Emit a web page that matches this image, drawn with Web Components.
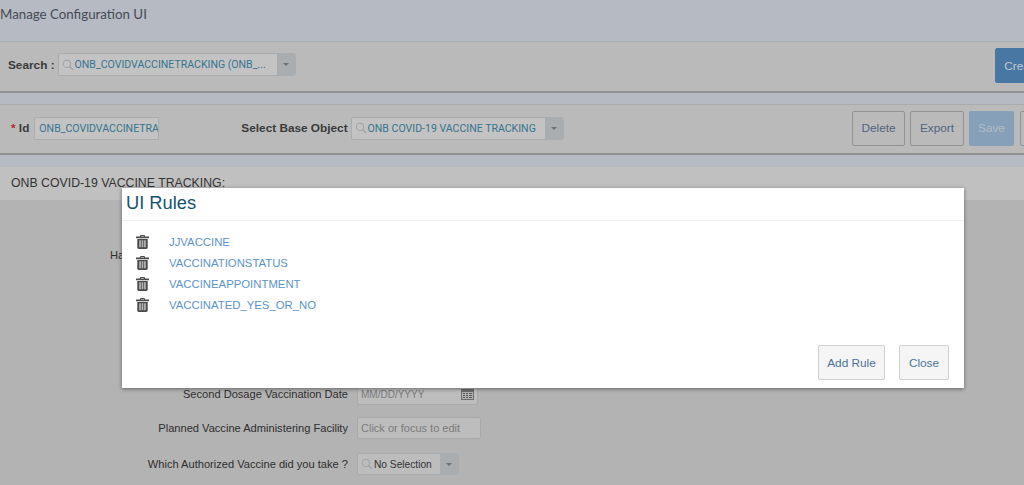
<!DOCTYPE html>
<html>
<head>
<meta charset="utf-8">
<title>Manage Configuration UI</title>
<style>
  html, body { margin: 0; height: 485px; overflow: hidden; }
  body { background: #b3b3b3; font-family: "Liberation Sans", sans-serif; }
</style>
</head>
<body>
<config-page></config-page>

<script>
const SEARCH_ICON = `<svg width="12" height="12" viewBox="0 0 13 13" fill="none" stroke="#a0a3a5" stroke-width="1.1"><circle cx="5.3" cy="5.3" r="3.9"/><path d="M8.2 8.2l3.8 3.8" stroke-width="1.5"/></svg>`;

class AppButton extends HTMLElement {
  connectedCallback() {
    const shadow = this.attachShadow({ mode: "open" });
    shadow.innerHTML = `
      <style>
        :host {
          display: inline-flex; align-items: center; justify-content: center;
          box-sizing: border-box; height: 35px; flex: none;
          border: 1px solid #929292; border-radius: 2px;
          background: #bababa; color: #4f6580;
          font: 11.8px "Liberation Sans", sans-serif;
        }
        :host([kind="primary"]) { background: #4877a3; border-color: #4877a3; color: #c3c9d0; }
        :host([kind="disabled"]) { background: #85a0b8; border-color: #85a0b8; color: #b3bdc6; }
        :host([kind="light"]) { background: #f5f5f5; border-color: #d0d0d0; color: #4a7299; }
      </style>
      <slot></slot>`;
  }
}
customElements.define("app-button", AppButton);

class ComboBox extends HTMLElement {
  connectedCallback() {
    const shadow = this.attachShadow({ mode: "open" });
    shadow.innerHTML = `
      <style>
        :host {
          display: inline-flex; box-sizing: border-box; height: 23px; flex: none;
          border: 1px solid #a9adaf; border-radius: 2px; background: #c3c3c3;
          color: #36748f; font: 10.55px Roboto, sans-serif;
        }
        :host([plain]) { color: #333; font: 10.2px "Liberation Sans", sans-serif; background: #bdbdbd; height: 22px; }
        .value { flex: 1; min-width: 0; display: flex; align-items: center; gap: 1px; padding-left: 3px; white-space: nowrap; overflow: hidden; }
        .arrow { width: 18px; display: flex; align-items: center; justify-content: center; background: #a9adaf; border-radius: 0 2px 2px 0; }
        .arrow i { width: 0; height: 0; border: 3.5px solid transparent; border-top: 3.5px solid #6f7377; border-bottom: 0; }
      </style>
      <div class="value">${SEARCH_ICON}<span><slot></slot></span></div>
      <div class="arrow"><i></i></div>`;
  }
}
customElements.define("combo-box", ComboBox);

class FormRow extends HTMLElement {
  connectedCallback() {
    const shadow = this.attachShadow({ mode: "open" });
    shadow.innerHTML = `
      <style>
        :host {
          display: grid; grid-template-columns: 238px auto; justify-content: start;
          column-gap: 9px; align-items: center;
          color: #2e2e2e; font: 11.1px "Liberation Sans", sans-serif;
        }
        .label { text-align: right; white-space: nowrap; }
        :host([left]) .label { text-align: left; }
      </style>
      <div class="label">${this.getAttribute("label")}</div>
      <div><slot></slot></div>`;
  }
}
customElements.define("form-row", FormRow);

class TextField extends HTMLElement {
  connectedCallback() {
    const shadow = this.attachShadow({ mode: "open" });
    shadow.innerHTML = `
      <style>
        :host {
          display: flex; align-items: center; justify-content: space-between;
          box-sizing: border-box; height: 22px; width: 124px; padding: 0 3px 0 3px;
          border: 1px solid #a9a9a9; border-radius: 2px; background: #bdbdbd;
          color: #7b7b7b; font: 11px "Liberation Sans", sans-serif;
        }
      </style>
      <slot></slot>`;
  }
}
customElements.define("text-field", TextField);

class RuleItem extends HTMLElement {
  connectedCallback() {
    const shadow = this.attachShadow({ mode: "open" });
    shadow.innerHTML = `
      <style>
        :host { display: flex; align-items: center; height: 21px; gap: 20px; }
        svg { flex: none; }
        a { color: #5b94c9; font: 11.35px "Liberation Sans", sans-serif; text-decoration: none; }
      </style>
      <svg width="13" height="14" viewBox="0 0 13 14">
        <path fill="#4a4a4a" d="M4.5 0h4l.7 1.6H13v1.6H0V1.600h3.800zM5.100.9l-.3.7h3.400L7.900.9z"/>
        <path fill="#4a4a4a" d="M1.300 4h10.400v8.600c0 .8-.6 1.400-1.400 1.400H2.700c-.8 0-1.400-.6-1.400-1.400z"/>
        <path fill="#b5b5b5" d="M3.200 5.300h1.700v7H3.200zM5.700 5.300h1.600v7H5.700zM8.100 5.300h1.700v7H8.100z"/>
      </svg>
      <a href="#"><slot></slot></a>`;
  }
}
customElements.define("rule-item", RuleItem);

class RulesDialog extends HTMLElement {
  connectedCallback() {
    const shadow = this.attachShadow({ mode: "open" });
    shadow.innerHTML = `
      <style>
        :host {
          position: absolute; left: 122px; top: 188px; width: 842px; height: 200px;
          display: flex; flex-direction: column; background: #fff;
          box-shadow: 0 1px 4px rgba(0,0,0,.45);
        }
        h2 {
          margin: 0; height: 33px; box-sizing: border-box; padding: 1px 0 0 4px;
          border-bottom: 1px solid #eee; color: #14536f;
          font: 400 18.3px/28px "Liberation Sans", sans-serif;
        }
        .list { flex: 1; padding: 10px 0 0 14px; }
        .actions { display: flex; justify-content: flex-end; gap: 14px; padding: 0 15px 8px 0; }
      </style>
      <h2>UI Rules</h2>
      <div class="list"><slot></slot></div>
      <div class="actions">
        <app-button kind="light" style="width:67px">Add Rule</app-button>
        <app-button kind="light" style="width:50px">Close</app-button>
      </div>`;
  }
}
customElements.define("rules-dialog", RulesDialog);

class ConfigPage extends HTMLElement {
  connectedCallback() {
    const shadow = this.attachShadow({ mode: "open" });
    shadow.innerHTML = `
      <style>
        :host { display: block; position: relative; width: 1024px; height: 485px; overflow: hidden; background: #b3b3b3; }
        .title { height: 41px; box-sizing: border-box; padding-top: 4px; background: #b6bac2; color: #454b55; font: 13.3px/20px Lato, sans-serif; }
        .panel {
          display: flex; align-items: center; box-sizing: border-box;
          background: #bababa; border-top: 1px solid #a9abae; border-bottom: 2px solid #8f9193;
          font: 700 11.8px "Liberation Sans", sans-serif; color: #3a3a3a;
        }
        .search { height: 52px; padding: 0 0 4px 8px; }
        .base { height: 51px; padding: 0 0 2px 11px; }
        .gap { height: 11px; background: #b6bac2; }
        .gap2 { height: 12px; background: #b6bac2; }
        .spacer { flex: 1; }
        .req { color: #b3281e; }
        .idbox {
          box-sizing: border-box; width: 125px; height: 23px; margin-left: 5px; padding-left: 4px;
          display: flex; align-items: center; overflow: hidden; white-space: nowrap;
          border: 1px solid #a9adaf; border-radius: 2px; background: #c3c3c3;
          color: #36748f; font: 400 10.55px Roboto, sans-serif;
        }
        .heading { height: 33px; box-sizing: border-box; padding: 7px 0 0 11px; background: #c0c0c0; color: #333; font: 12.3px/18px "Liberation Sans", sans-serif; }
        .form { display: flex; flex-direction: column; padding: 45px 0 0 110px; }
        form-row { height: 20px; }
        .buttons { display: flex; gap: 5px; margin-right: -26px; }
      </style>
      <div class="title">Manage Configuration UI</div>
      <div class="panel search">
        <span>Search :</span>
        <combo-box style="width:238px;margin-left:3px">ONB_COVIDVACCINETRACKING (ONB_...</combo-box>
        <div class="spacer"></div>
        <app-button kind="primary" style="width:54px;margin:2px -25px 0 0">Create</app-button>
      </div>
      <div class="gap"></div>
      <div class="panel base">
        <span><span class="req">*</span> Id</span>
        <div class="idbox">ONB_COVIDVACCINETRA</div>
        <span style="margin-left:82px">Select Base Object</span>
        <combo-box style="width:213px;margin-left:3px">ONB COVID-19 VACCINE TRACKING</combo-box>
        <div class="spacer"></div>
        <div class="buttons">
          <app-button style="width:53px">Delete</app-button>
          <app-button style="width:54px">Export</app-button>
          <app-button kind="disabled" style="width:45px">Save</app-button>
          <app-button style="width:30px;margin-left:1px"></app-button>
        </div>
      </div>
      <div class="gap2"></div>
      <div class="heading">ONB COVID-19 VACCINE TRACKING:</div>
      <div class="form">
        <form-row label="Ha" left></form-row>
        <form-row label="Second Dosage Vaccination Date" style="margin-top:118px">
          <text-field style="width:121px;font-size:10px">MM/DD/YYYY
            <svg width="13" height="11" viewBox="0 0 13 11"><rect width="13" height="11" fill="#6d6d6d"/><rect x="1" y="3" width="11" height="7" fill="#b0b0b0"/><path d="M2 4h2v1H2zM5 4h2v1H5zM8 4h3v1H8zM2 6h2v1H2zM5 6h2v1H5zM8 6h3v1H8zM2 8h2v1H2zM5 8h2v1H5zM8 8h3v1H8z" fill="#5a5a5a"/></svg>
          </text-field>
        </form-row>
        <form-row label="Planned Vaccine Administering Facility" style="margin-top:14px">
          <text-field>Click or focus to edit</text-field>
        </form-row>
        <form-row label="Which Authorized Vaccine did you take ?" style="margin-top:16px">
          <combo-box plain style="width:102px;display:flex">No Selection</combo-box>
        </form-row>
      </div>
      <rules-dialog>
        <rule-item>JJVACCINE</rule-item>
        <rule-item>VACCINATIONSTATUS</rule-item>
        <rule-item>VACCINEAPPOINTMENT</rule-item>
        <rule-item>VACCINATED_YES_OR_NO</rule-item>
      </rules-dialog>`;
  }
}
customElements.define("config-page", ConfigPage);
</script>
</body>
</html>
